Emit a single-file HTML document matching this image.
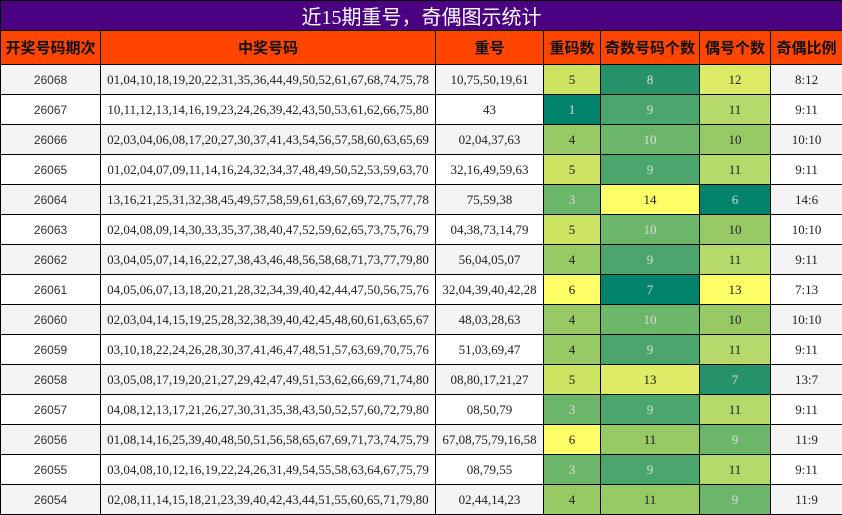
<!DOCTYPE html>
<html><head><meta charset="utf-8"><style>
html,body{margin:0;padding:0;background:#fff;}
table{border-collapse:collapse;table-layout:fixed;width:842px;font-family:"Liberation Serif","Noto Serif CJK SC",serif;font-size:13px;color:#222;}
td,th{border:1px solid #000;text-align:center;padding:0;overflow:hidden;white-space:nowrap;}
.t td{background:#4B0082;color:#fff;height:28px;font-family:"Liberation Serif","Noto Sans CJK SC",sans-serif;font-size:20px;font-weight:normal;}
.h th{background:#FF4500;color:#111;height:33px;font-family:"Liberation Sans","Noto Sans CJK SC",sans-serif;font-size:15px;font-weight:bold;}
tr.r td{height:29px;}
tr.r:nth-child(odd) td{background:#F4F4F4;}
td.p{font-family:"Liberation Sans",sans-serif;font-size:12px;color:#333;}
tr.r td.A{background:#00836A;color:#ddd}
tr.r td.B{background:#25926A;color:#ddd}
tr.r td.C{background:#4AA66A;color:#ddd}
tr.r td.D{background:#6CB66A;color:#ddd}
tr.r td.E{background:#97C965}
tr.r td.F{background:#B6DA69}
tr.r td.G{background:#CCE462}
tr.r td.H{background:#DDEB66}
tr.r td.I{background:#FFFF66}
</style></head><body>
<table>
<colgroup><col style="width:100px"><col style="width:335px"><col style="width:108px"><col style="width:57px"><col style="width:99px"><col style="width:71px"><col style="width:72px"></colgroup>
<tr class="t"><td colspan="7">近15期重号，奇偶图示统计</td></tr>
<tr class="h"><th>开奖号码期次</th><th>中奖号码</th><th>重号</th><th>重码数</th><th>奇数号码个数</th><th>偶号个数</th><th>奇偶比例</th></tr>
<tbody>
<tr class="r"><td class="p">26068</td><td>01,04,10,18,19,20,22,31,35,36,44,49,50,52,61,67,68,74,75,78</td><td>10,75,50,19,61</td><td class="G">5</td><td class="B">8</td><td class="H">12</td><td>8:12</td></tr>
<tr class="r"><td class="p">26067</td><td>10,11,12,13,14,16,19,23,24,26,39,42,43,50,53,61,62,66,75,80</td><td>43</td><td class="A">1</td><td class="C">9</td><td class="F">11</td><td>9:11</td></tr>
<tr class="r"><td class="p">26066</td><td>02,03,04,06,08,17,20,27,30,37,41,43,54,56,57,58,60,63,65,69</td><td>02,04,37,63</td><td class="E">4</td><td class="D">10</td><td class="E">10</td><td>10:10</td></tr>
<tr class="r"><td class="p">26065</td><td>01,02,04,07,09,11,14,16,24,32,34,37,48,49,50,52,53,59,63,70</td><td>32,16,49,59,63</td><td class="G">5</td><td class="C">9</td><td class="F">11</td><td>9:11</td></tr>
<tr class="r"><td class="p">26064</td><td>13,16,21,25,31,32,38,45,49,57,58,59,61,63,67,69,72,75,77,78</td><td>75,59,38</td><td class="D">3</td><td class="I">14</td><td class="A">6</td><td>14:6</td></tr>
<tr class="r"><td class="p">26063</td><td>02,04,08,09,14,30,33,35,37,38,40,47,52,59,62,65,73,75,76,79</td><td>04,38,73,14,79</td><td class="G">5</td><td class="D">10</td><td class="E">10</td><td>10:10</td></tr>
<tr class="r"><td class="p">26062</td><td>03,04,05,07,14,16,22,27,38,43,46,48,56,58,68,71,73,77,79,80</td><td>56,04,05,07</td><td class="E">4</td><td class="C">9</td><td class="F">11</td><td>9:11</td></tr>
<tr class="r"><td class="p">26061</td><td>04,05,06,07,13,18,20,21,28,32,34,39,40,42,44,47,50,56,75,76</td><td>32,04,39,40,42,28</td><td class="I">6</td><td class="A">7</td><td class="I">13</td><td>7:13</td></tr>
<tr class="r"><td class="p">26060</td><td>02,03,04,14,15,19,25,28,32,38,39,40,42,45,48,60,61,63,65,67</td><td>48,03,28,63</td><td class="E">4</td><td class="D">10</td><td class="E">10</td><td>10:10</td></tr>
<tr class="r"><td class="p">26059</td><td>03,10,18,22,24,26,28,30,37,41,46,47,48,51,57,63,69,70,75,76</td><td>51,03,69,47</td><td class="E">4</td><td class="C">9</td><td class="F">11</td><td>9:11</td></tr>
<tr class="r"><td class="p">26058</td><td>03,05,08,17,19,20,21,27,29,42,47,49,51,53,62,66,69,71,74,80</td><td>08,80,17,21,27</td><td class="G">5</td><td class="H">13</td><td class="B">7</td><td>13:7</td></tr>
<tr class="r"><td class="p">26057</td><td>04,08,12,13,17,21,26,27,30,31,35,38,43,50,52,57,60,72,79,80</td><td>08,50,79</td><td class="D">3</td><td class="C">9</td><td class="F">11</td><td>9:11</td></tr>
<tr class="r"><td class="p">26056</td><td>01,08,14,16,25,39,40,48,50,51,56,58,65,67,69,71,73,74,75,79</td><td>67,08,75,79,16,58</td><td class="I">6</td><td class="E">11</td><td class="D">9</td><td>11:9</td></tr>
<tr class="r"><td class="p">26055</td><td>03,04,08,10,12,16,19,22,24,26,31,49,54,55,58,63,64,67,75,79</td><td>08,79,55</td><td class="D">3</td><td class="C">9</td><td class="F">11</td><td>9:11</td></tr>
<tr class="r"><td class="p">26054</td><td>02,08,11,14,15,18,21,23,39,40,42,43,44,51,55,60,65,71,79,80</td><td>02,44,14,23</td><td class="E">4</td><td class="E">11</td><td class="D">9</td><td>11:9</td></tr>
</tbody></table>
</body></html>
